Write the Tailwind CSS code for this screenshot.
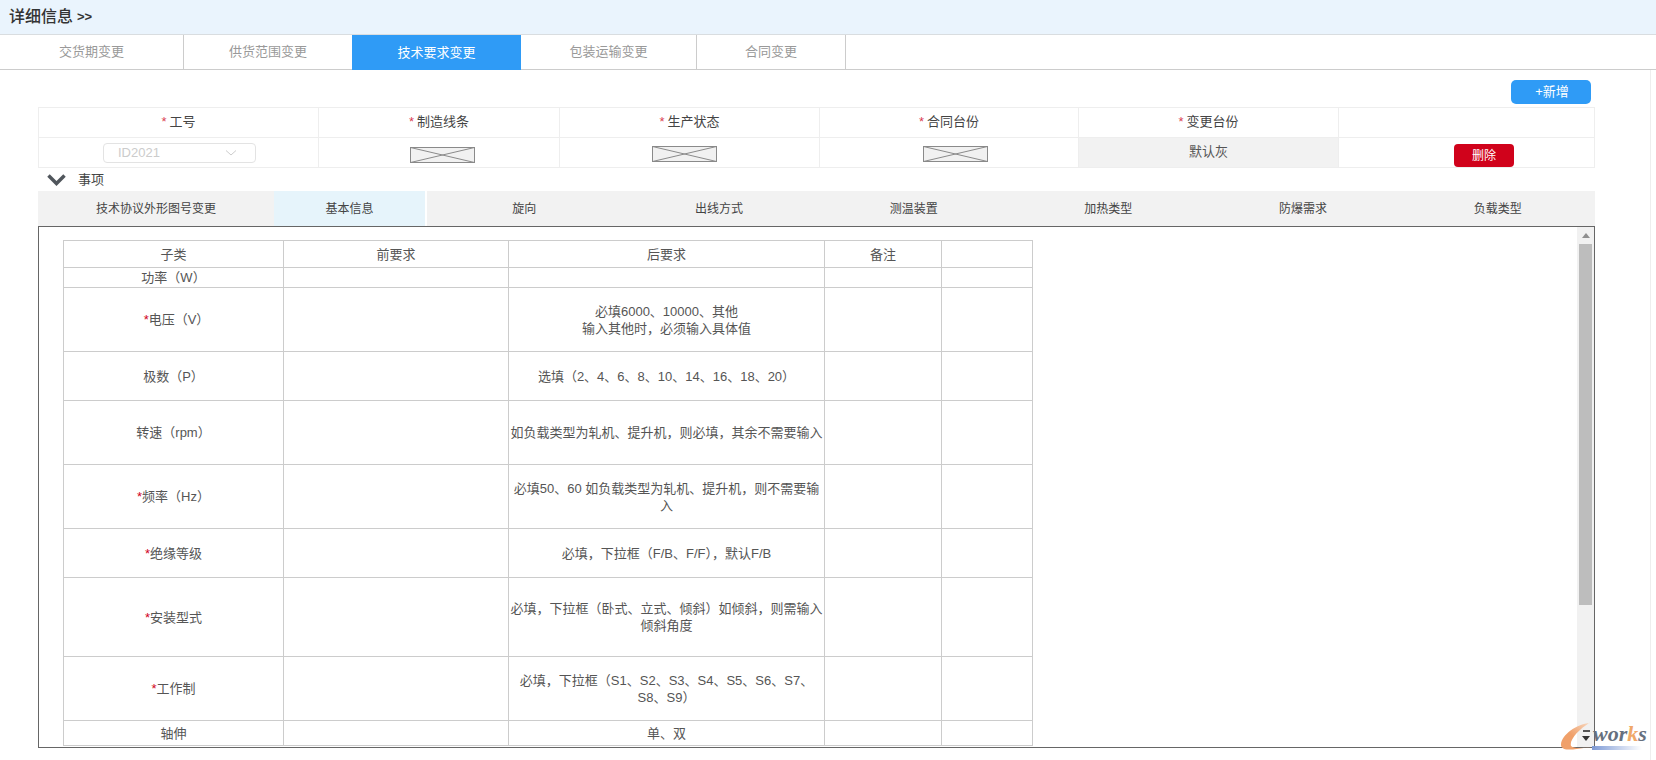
<!DOCTYPE html>
<html lang="zh-CN">

<head>
    <meta charset="UTF-8">
    <title>详细信息</title>
    <script src="https://cdn.jsdelivr.net/npm/@tailwindcss/browser@4"></script>
</head>

<body class="relative h-[760px] w-[1656px] overflow-hidden bg-white font-['Liberation_Sans','Noto_Sans_CJK_SC',sans-serif] text-[13px] text-[#555]">

    <!-- title -->
    <div class="flex h-[35px] items-center border-b border-[#d9dde0] bg-[#eaf4fd] pl-[9px] text-[16px] font-medium text-[#333]">详细信息<span class="ml-[4px] text-[13px] font-bold">&gt;&gt;</span></div>

    <!-- top tabs -->
    <div class="flex h-[35px] border-b border-[#ccc] text-[#999]">
        <div class="flex w-[184px] items-center justify-center border-r border-[#ccc]">交货期变更</div>
        <div class="flex w-[168px] items-center justify-center">供货范围变更</div>
        <div class="-mb-px flex w-[169px] items-center justify-center bg-[#2f9bf6] text-white">技术要求变更</div>
        <div class="flex w-[176px] items-center justify-center border-r border-[#ccc]">包装运输变更</div>
        <div class="flex w-[149px] items-center justify-center border-r border-[#ccc]">合同变更</div>
    </div>

    <div class="ml-[38px] w-[1557px]">
        <div class="flex justify-end pr-[4px] pt-[10px]">
            <button class="h-[24px] w-[80px] rounded-[5px] bg-[#2f9bf6] pl-[2px] text-white">+新增</button>
        </div>

        <!-- form table -->
        <div class="mt-[3px] grid grid-cols-[280px_241px_260px_259px_260px_255px] border-t border-l border-r border-[#eee] text-[#444]">
            <div class="flex h-[30px] items-center justify-center border-r border-b border-[#eee] pb-[2px]"><span class="mr-[3px] text-[#d0021b]/80">*</span>工号</div>
            <div class="flex h-[30px] items-center justify-center border-r border-b border-[#eee] pb-[2px]"><span class="mr-[3px] text-[#d0021b]/80">*</span>制造线条</div>
            <div class="flex h-[30px] items-center justify-center border-r border-b border-[#eee] pb-[2px]"><span class="mr-[3px] text-[#d0021b]/80">*</span>生产状态</div>
            <div class="flex h-[30px] items-center justify-center border-r border-b border-[#eee] pb-[2px]"><span class="mr-[3px] text-[#d0021b]/80">*</span>合同台份</div>
            <div class="flex h-[30px] items-center justify-center border-r border-b border-[#eee] pb-[2px]"><span class="mr-[3px] text-[#d0021b]/80">*</span>变更台份</div>
            <div class="h-[30px] border-b border-[#eee]"></div>

            <div class="flex h-[30px] items-center border-r border-b border-[#eee] pl-[64px]">
                <div class="flex h-[20px] w-[153px] items-center justify-between rounded-[4px] border border-[#e3e3e3] pl-[14px] pr-[18px] text-[#ccc]">
                    ID2021
                    <svg class="h-[6px] w-[12px]" viewBox="0 0 12 6" fill="none" stroke="#ccc"><path d="M1 .5 6 5l5-4.5" /></svg>
                </div>
            </div>
            <div class="flex h-[30px] items-center justify-center border-r border-b border-[#eee] pl-[6px] pt-[5px]">
                <svg class="h-[16px] w-[65px]" viewBox="0 0 65 16" fill="#f1f1f1" stroke="#8a8a8a"><rect x=".5" y=".5" width="64" height="15" /><path d="M.5.5l64 15M64.5.5l-64 15" /></svg>
            </div>
            <div class="flex h-[30px] items-center justify-center border-r border-b border-[#eee] pr-[10px] pt-[2px]">
                <svg class="h-[16px] w-[65px]" viewBox="0 0 65 16" fill="#f1f1f1" stroke="#8a8a8a"><rect x=".5" y=".5" width="64" height="15" /><path d="M.5.5l64 15M64.5.5l-64 15" /></svg>
            </div>
            <div class="flex h-[30px] items-center justify-center border-r border-b border-[#eee] pl-[12px] pt-[2px]">
                <svg class="h-[16px] w-[65px]" viewBox="0 0 65 16" fill="#f1f1f1" stroke="#8a8a8a"><rect x=".5" y=".5" width="64" height="15" /><path d="M.5.5l64 15M64.5.5l-64 15" /></svg>
            </div>
            <div class="flex h-[30px] items-center justify-center border-r border-b border-[#eee] bg-[#f2f2f2] pb-[2px] text-[#555]">默认灰</div>
            <div class="flex h-[30px] items-end justify-center border-b border-[#eee] pl-[35px]">
                <button class="h-[23px] w-[60px] rounded-[4px] bg-[#d0021b] text-[12px] text-white">删除</button>
            </div>
        </div>

        <!-- 事项 -->
        <div class="flex h-[23px] items-center text-[#444]">
            <svg class="ml-[9px] mr-[12px] h-[12px] w-[19px]" viewBox="0 0 19 12" fill="none" stroke="#50565c" stroke-width="3.500"><path d="M1.500 1.500 9.500 9.500 17.500 1.500" /></svg>
            事项
        </div>

        <!-- sub tabs -->
        <div class="flex h-[35px] bg-[#f2f2f2] pt-[1px] text-[12px] text-[#444]">
            <div class="flex w-[236px] items-center justify-center">技术协议外形图号变更</div>
            <div class="-mt-px flex w-[153px] items-center justify-center border-r-2 border-white bg-[#e6f4fb] pt-[1px]">基本信息</div>
            <div class="flex flex-1 items-center justify-center">旋向</div>
            <div class="flex flex-1 items-center justify-center">出线方式</div>
            <div class="flex flex-1 items-center justify-center">测温装置</div>
            <div class="flex flex-1 items-center justify-center">加热类型</div>
            <div class="flex flex-1 items-center justify-center">防爆需求</div>
            <div class="flex flex-1 items-center justify-center">负载类型</div>
        </div>

        <!-- scrolling panel -->
        <div class="flex h-[522px] border border-[#666]">
            <div class="min-w-0 flex-1 overflow-hidden pl-[24px] pt-[13px]">
                <table class="w-[969px] table-fixed border-collapse text-center">
                    <colgroup>
                        <col class="w-[220px]">
                        <col class="w-[225px]">
                        <col class="w-[316px]">
                        <col class="w-[117px]">
                        <col class="w-[91px]">
                    </colgroup>
                    <tbody class="[&_td]:border [&_td]:border-[#ccc] [&_td]:leading-[17px]">
                        <tr class="h-[27px]"><td>子类</td><td>前要求</td><td>后要求</td><td>备注</td><td></td></tr>
                        <tr class="h-[20px]"><td>功率（W）</td><td></td><td></td><td></td><td></td></tr>
                        <tr class="h-[64px]"><td class="pl-[6px]"><span class="text-[#d0021b]">*</span>电压（V）</td><td></td><td>必填6000、10000、其他<br>输入其他时，必须输入具体值</td><td></td><td></td></tr>
                        <tr class="h-[49px]"><td>极数（P）</td><td></td><td>选填（2、4、6、8、10、14、16、18、20）</td><td></td><td></td></tr>
                        <tr class="h-[64px]"><td>转速（rpm）</td><td></td><td>如负载类型为轧机、提升机，则必填，其余不需要输入</td><td></td><td></td></tr>
                        <tr class="h-[64px]"><td><span class="text-[#d0021b]">*</span>频率（Hz）</td><td></td><td>必填50、60 如负载类型为轧机、提升机，则不需要输入</td><td></td><td></td></tr>
                        <tr class="h-[49px]"><td><span class="text-[#d0021b]">*</span>绝缘等级</td><td></td><td>必填，下拉框（F/B、F/F），默认F/B</td><td></td><td></td></tr>
                        <tr class="h-[79px]"><td><span class="text-[#d0021b]">*</span>安装型式</td><td></td><td>必填，下拉框（卧式、立式、倾斜）如倾斜，则需输入倾斜角度</td><td></td><td></td></tr>
                        <tr class="h-[64px]"><td><span class="text-[#d0021b]">*</span>工作制</td><td></td><td>必填，下拉框（S1、S2、S3、S4、S5、S6、S7、S8、S9）</td><td></td><td></td></tr>
                        <tr class="h-[25px]"><td>轴伸</td><td></td><td>单、双</td><td></td><td></td></tr>
                    </tbody>
                </table>
            </div>
            <!-- scrollbar -->
            <div class="flex w-[17px] flex-col items-center bg-[#f1f1f1]">
                <div class="flex h-[17px] w-full items-center justify-center">
                    <svg class="h-[5px] w-[8px]" viewBox="0 0 8 5" fill="#8f8f8f"><path d="M4 0l4 5H0z" /></svg>
                </div>
                <div class="h-[361px] w-[13px] bg-[#bdbdbd]"></div>
                <div class="flex-1"></div>
                <div class="flex h-[17px] w-full items-center justify-center">
                    <svg class="h-[5px] w-[8px]" viewBox="0 0 8 5" fill="#333"><path d="M0 0h8L4 5z" /></svg>
                </div>
            </div>
        </div>
    </div>

    <!-- page edge -->
    <div class="absolute right-[5px] top-[70px] h-[690px] w-px bg-[#eee]"></div>

    <!-- e-works watermark -->
    <div class="absolute left-[1561px] top-[722px] h-[34px] w-[90px]">
        <svg class="absolute left-0 top-0 h-[30px] w-[32px]" viewBox="0 0 32 30">
            <defs>
                <linearGradient id="swoosh" x1="0" y1="1" x2="1" y2="0">
                    <stop offset="0.450" stop-color="#f0a06a" />
                    <stop offset="1" stop-color="#f8dcc6" />
                </linearGradient>
            </defs>
            <path d="M29 1C15 2 1 13 0 22c-.5 5 5 6 12 5.500l18-2.500c-8 1-17 2-20-1-2-6 8-17 19-23.500z" fill="url(#swoosh)" />
        </svg>
        <div class="absolute left-[31px] top-[24px] h-[4px] w-[50px] bg-gradient-to-r from-[#7f9bd6] to-white/0"></div>
        <div class="absolute left-[22px] top-[8px] h-[2px] w-[7px] bg-[#555]"></div>
        <div class="absolute left-[32px] top-[-1px] font-['Liberation_Serif',serif] text-[22px] font-bold italic leading-[26px] text-[#66707e]">wor<span class="text-[#f0a868]">k</span>s</div>
    </div>

</body>

</html>
